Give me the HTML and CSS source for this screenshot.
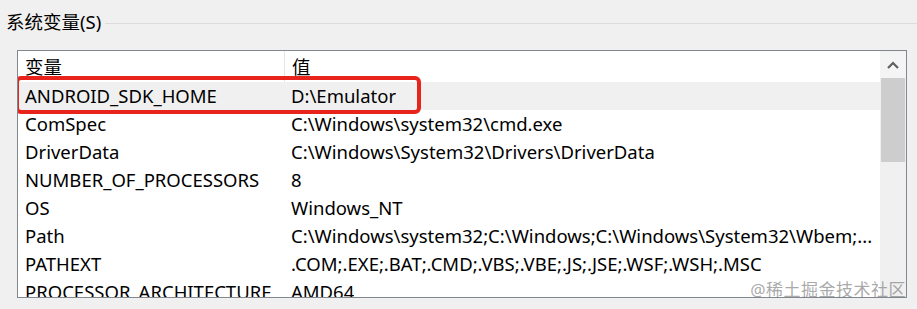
FILE: index.html
```html
<!DOCTYPE html>
<html lang="zh-CN">
<head>
    <meta charset="UTF-8">
    <title>系统变量</title>
    <link rel="stylesheet" href="styles.css">
</head>
<body>
    <div class="group">
        <div class="group-title">
            <span>系统变量(S)</span>
            <div class="group-line"></div>
        </div>
        <div class="listbox">
            <div class="list">
                <div class="row header">
                    <div class="cell name">变量</div>
                    <div class="cell value">值</div>
                </div>
                <div class="row selected">
                    <div class="cell name">ANDROID_SDK_HOME</div>
                    <div class="cell value">D:\Emulator</div>
                </div>
                <div class="row">
                    <div class="cell name">ComSpec</div>
                    <div class="cell value">C:\Windows\system32\cmd.exe</div>
                </div>
                <div class="row">
                    <div class="cell name">DriverData</div>
                    <div class="cell value">C:\Windows\System32\Drivers\DriverData</div>
                </div>
                <div class="row">
                    <div class="cell name">NUMBER_OF_PROCESSORS</div>
                    <div class="cell value">8</div>
                </div>
                <div class="row">
                    <div class="cell name">OS</div>
                    <div class="cell value">Windows_NT</div>
                </div>
                <div class="row">
                    <div class="cell name">Path</div>
                    <div class="cell value">C:\Windows\system32;C:\Windows;C:\Windows\System32\Wbem;...</div>
                </div>
                <div class="row">
                    <div class="cell name">PATHEXT</div>
                    <div class="cell value">.COM;.EXE;.BAT;.CMD;.VBS;.VBE;.JS;.JSE;.WSF;.WSH;.MSC</div>
                </div>
                <div class="row">
                    <div class="cell name">PROCESSOR_ARCHITECTURE</div>
                    <div class="cell value">AMD64</div>
                </div>
            </div>
            <div class="scrollbar">
                <div class="scroll-btn">
                    <svg width="12" height="8" viewBox="0 0 12 8">
                        <polyline points="1,7 6,2 11,7" fill="none" stroke="#606060" stroke-width="2.2"/>
                    </svg>
                </div>
                <div class="scroll-thumb"></div>
            </div>
            <div class="highlight"></div>
        </div>
    </div>
    <div class="watermark">@稀土掘金技术社区</div>
</body>
</html>
```

FILE: styles.css
```css
body {
    margin: 0;
    background: #f0f0f0;
    font-family: "Noto Sans", "Noto Sans CJK SC", sans-serif;
    font-size: 18.5px;
    color: #000;
    overflow: hidden;
    position: relative;
    height: 309px;
}
.group {
    padding: 9px 0 0 6px;
}
.group-title {
    display: flex;
    align-items: center;
    height: 26px;
    line-height: 26px;
}
.group-line {
    flex: 1;
    height: 1px;
    background: #dcdcdc;
    margin-left: 4px;
    margin-top: 2px;
}
.listbox {
    position: relative;
    margin: 15px 0 0 11px;
    width: 888px;
    height: 246px;
    border: 1px solid #828790;
    background: #fff;
    display: flex;
    overflow: hidden;
}
.list {
    flex: 1;
}
.row {
    display: flex;
    height: 28px;
    line-height: 28px;
    white-space: nowrap;
}
.row.header {
    height: 31px;
    line-height: 31px;
}
.row.header .name {
    border-right: 1px solid #e5e5e5;
}
.row.selected {
    background: #f0f0f0;
}
.cell {
    padding-left: 7px;
    overflow: hidden;
}
.cell.name {
    width: 259px;
}
.scrollbar {
    width: 26px;
    background: #f0f0f0;
    display: flex;
    flex-direction: column;
}
.scroll-btn {
    height: 26px;
    display: flex;
    align-items: center;
    justify-content: center;
    background: #f4f4f4;
    margin-top: 1px;
}
.scroll-thumb {
    height: 84px;
    background: #cdcdcd;
    margin: 0 1px;
}
.highlight {
    position: absolute;
    left: -3px;
    top: 25px;
    width: 398px;
    height: 30px;
    border: 4px solid #e8231c;
    border-radius: 6px;
}
.watermark {
    position: absolute;
    right: 11px;
    bottom: 8px;
    font-size: 17px;
    color: rgba(120, 120, 120, 0.65);
    letter-spacing: 0.5px;
}
```
